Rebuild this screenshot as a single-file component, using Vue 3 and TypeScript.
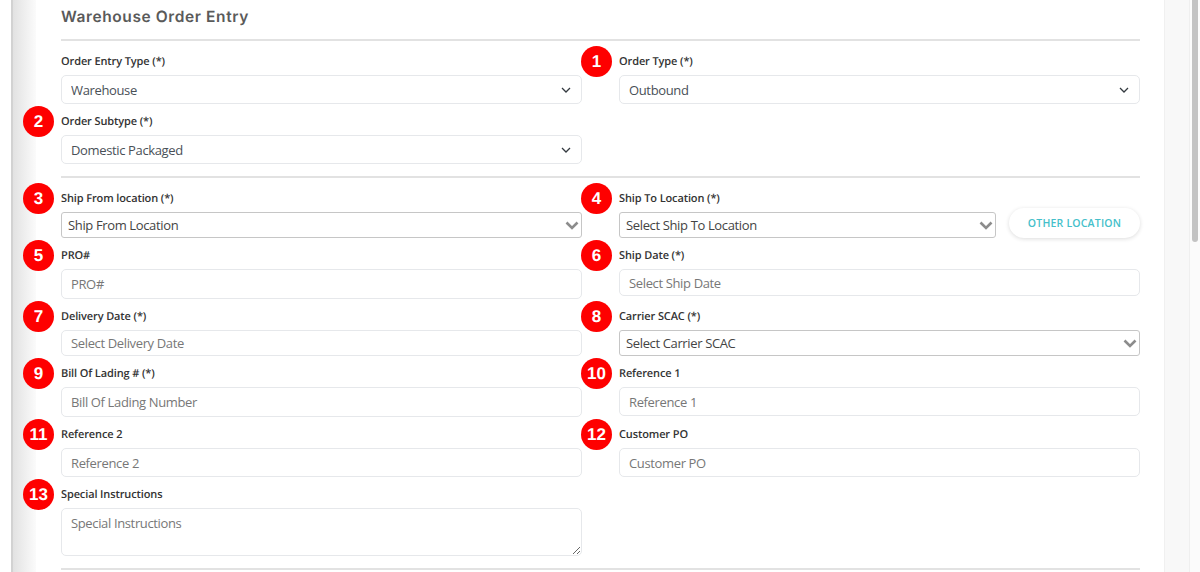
<script setup lang="ts">
interface Field {
  label: string
  kind: 'select' | 'native' | 'input' | 'textarea'
  value: string
  badge?: number
  size?: 'xs' | 'sm' | 'md'
  extra?: string
}
interface Row { left?: Field; right?: Field }
const sectionOne: Row[] = [
  {
    left: { label: 'Order Entry Type (*)', kind: 'select', value: 'Warehouse' },
    right: { label: 'Order Type (*)', kind: 'select', value: 'Outbound', badge: 1 },
  },
  { left: { label: 'Order Subtype (*)', kind: 'select', value: 'Domestic Packaged', badge: 2 } },
]
const sectionTwo: Row[] = [
  {
    left: { label: 'Ship From location (*)', kind: 'native', value: 'Ship From Location', badge: 3 },
    right: { label: 'Ship To Location (*)', kind: 'native', value: 'Select Ship To Location', badge: 4, extra: 'OTHER LOCATION' },
  },
  {
    left: { label: 'PRO#', kind: 'input', value: 'PRO#', badge: 5 },
    right: { label: 'Ship Date (*)', kind: 'input', value: 'Select Ship Date', badge: 6, size: 'sm' },
  },
  {
    left: { label: 'Delivery Date (*)', kind: 'input', value: 'Select Delivery Date', badge: 7, size: 'xs' },
    right: { label: 'Carrier SCAC (*)', kind: 'native', value: 'Select Carrier SCAC', badge: 8 },
  },
  {
    left: { label: 'Bill Of Lading # (*)', kind: 'input', value: 'Bill Of Lading Number', badge: 9 },
    right: { label: 'Reference 1', kind: 'input', value: 'Reference 1', badge: 10, size: 'md' },
  },
  {
    left: { label: 'Reference 2', kind: 'input', value: 'Reference 2', badge: 11, size: 'md' },
    right: { label: 'Customer PO', kind: 'input', value: 'Customer PO', badge: 12, size: 'md' },
  },
  { left: { label: 'Special Instructions', kind: 'textarea', value: 'Special Instructions', badge: 13 } },
]
const sections: Row[][] = [sectionOne, sectionTwo]
const cells = (r: Row): (Field | undefined)[] => [r.left, r.right]
</script>

<template>
  <div class="page">
    <div class="gutter"></div>
    <main class="card">
      <h1 class="title">Warehouse Order Entry</h1>
      <template v-for="(section, s) in sections" :key="s">
        <hr class="rule" />
        <div class="section">
          <div v-for="(row, r) in section" :key="r" class="row">
            <template v-for="(f, c) in cells(row)" :key="c">
              <div v-if="f" class="field">
                <span v-if="f.badge" class="badge">{{ f.badge }}</span>
                <label class="label">{{ f.label }}</label>
                <div class="control-line">
                  <div v-if="f.kind === 'select' || f.kind === 'native'" class="select-wrap" :class="f.kind">
                    <select class="control">
                      <option>{{ f.value }}</option>
                    </select>
                    <svg v-if="f.kind === 'select'" class="chev" width="10" height="6" viewBox="0 0 10 6">
                      <path d="M1 1l4 4 4-4" fill="none" stroke="#343a40" stroke-width="1.3" />
                    </svg>
                    <svg v-else class="chev big" width="14" height="9" viewBox="0 0 14 9">
                      <path d="M1.5 1.5L7 7l5.500-5.500" fill="none" stroke="#8c8c8c" stroke-width="2.600" />
                    </svg>
                  </div>
                  <input v-else-if="f.kind === 'input'" class="control text" :class="f.size" :placeholder="f.value" />
                  <textarea v-else class="control area" :placeholder="f.value"></textarea>
                  <button v-if="f.extra" class="other" type="button">{{ f.extra }}</button>
                </div>
              </div>
              <div v-else></div>
            </template>
          </div>
        </div>
      </template>
      <hr class="rule" />
    </main>
    <div class="margin"></div>
    <div class="scrollbar"><div class="thumb"></div></div>
  </div>
</template>

<style>
html, body { margin: 0; height: 572px; overflow: hidden; background: #fff; }
</style>

<style scoped>
.page {
  display: flex;
  height: 572px;
  overflow: hidden;
  font-family: "Open Sans", "Noto Sans", sans-serif;
  text-rendering: geometricPrecision;
  background: #fff;
}
.gutter {
  width: 25px;
  margin-left: 11px;
  flex: none;
  border-left: 2px solid #d2d2d2;
  box-sizing: border-box;
  background: linear-gradient(90deg, #e2e2e2, #fbfbfb);
}
.card {
  flex: 1;
  min-width: 0;
  padding: 0 24px 0 25px;
  background: #fff;
}
.margin {
  width: 25px;
  flex: none;
  box-sizing: border-box;
  background: #f8f8f8;
  border-left: 1px solid #f0f0f0;
}
.scrollbar {
  width: 11px;
  flex: none;
  box-sizing: border-box;
  padding-left: 2px;
  background: #fbfbfb;
  border-left: 1px solid #efefef;
}
.thumb {
  width: 6px;
  height: 242px;
  background: #c3c3c3;
  border-radius: 0 0 3px 3px;
}
.title {
  margin: 0;
  height: 39px;
  line-height: 34px;
  font-family: Inter, "Open Sans", sans-serif;
  font-size: 15.500px;
  font-weight: 600;
  letter-spacing: 0.6px;
  color: #5a5a5a;
}
.rule {
  margin: 0;
  border: 0;
  height: 2px;
  background: #e2e2e2;
}
.section {
  display: flex;
  flex-direction: column;
  gap: 7px;
  padding-top: 10px;
  padding-bottom: 12px;
}
.row {
  display: grid;
  grid-template-columns: 521px 521px;
  column-gap: 37px;
  align-items: start;
}
.field { position: relative; }
.badge {
  position: absolute;
  left: -38px;
  top: -5.500px;
  width: 31px;
  height: 31px;
  border-radius: 50%;
  background: #fe0000;
  color: #fff;
  font-family: "Liberation Sans", Arial, sans-serif;
  font-weight: 700;
  font-size: 17px;
  line-height: 31px;
  text-align: center;
}
.label {
  display: block;
  height: 20px;
  line-height: 22px;
  margin-bottom: 4px;
  font-size: 11px;
  font-weight: 600;
  letter-spacing: -0.12px;
  color: #333;
}
.control-line {
  display: flex;
  gap: 13px;
  align-items: flex-end;
}
.select-wrap {
  position: relative;
  flex: 1;
  min-width: 0;
}
.control {
  display: block;
  width: 100%;
  box-sizing: border-box;
  margin: 0;
  background: #fff;
  font-family: inherit;
  font-size: 13px;
  letter-spacing: -0.36px;
  color: #495057;
  outline: none;
}
select.control {
  appearance: none;
  -webkit-appearance: none;
}
.select .control {
  height: 29px;
  padding: 0 9px;
  border: 1px solid #e6e8eb;
  border-radius: 5px;
}
.native .control {
  height: 26px;
  padding: 0 6px;
  border: 1px solid #c6c6c6;
  border-radius: 3px;
  color: #444;
}
.chev {
  position: absolute;
  right: 11px;
  top: 12px;
  pointer-events: none;
}
.chev.big {
  right: 3px;
  top: 9px;
}
.text {
  height: 30px;
  padding: 0 9px;
  border: 1px solid #e6e8eb;
  border-radius: 5px;
}
.text.md { height: 29px; }
.text.sm { height: 27px; }
.text.xs { height: 26px; }
.area {
  height: 48px;
  padding: 5px 9px;
  border: 1px solid #e6e8eb;
  border-radius: 5px;
  resize: vertical;
}
.control::placeholder { color: #777; opacity: 1; }
.other {
  flex: none;
  width: 131px;
  height: 30px;
  margin-top: -4px;
  padding: 0;
  border: 0;
  border-radius: 15px;
  background: #fff;
  box-shadow: 0 1px 4px rgba(0, 0, 0, 0.14);
  font-family: inherit;
  font-size: 10.500px;
  font-weight: 600;
  letter-spacing: 0.2px;
  color: #45bfca;
}
</style>
